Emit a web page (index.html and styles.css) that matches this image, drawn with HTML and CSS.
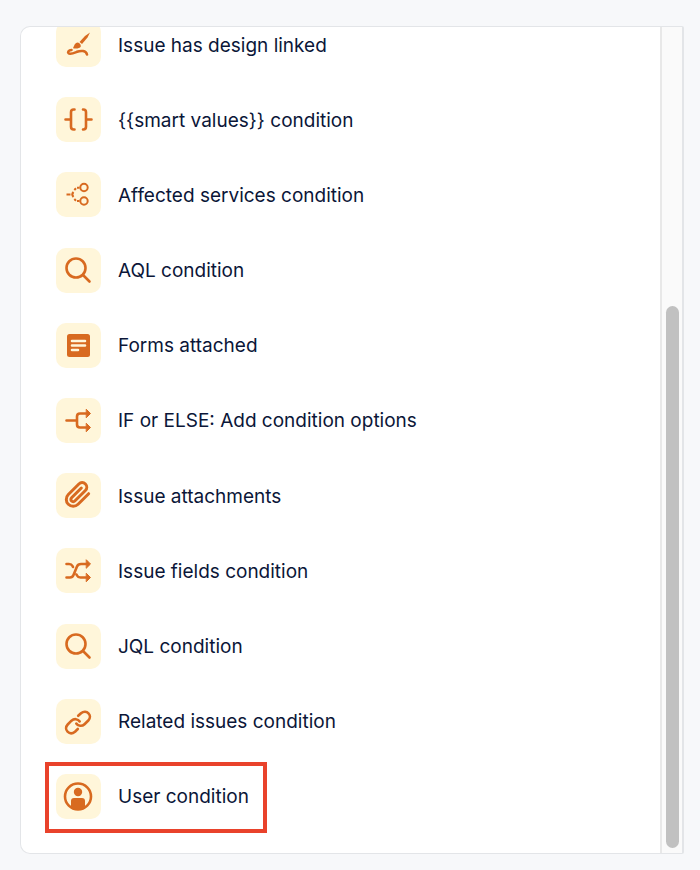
FILE: index.html
```html
<!DOCTYPE html>
<html lang="en">
<head>
    <meta charset="UTF-8" />
    <meta name="viewport" content="width=device-width, initial-scale=1.0" />
    <title>Conditions</title>
    <link rel="stylesheet" href="styles.css">
</head>
<body>
<main class="panel">
    <ul class="condition-list">
        <li>
            <button class="condition" type="button">
                <span class="tile">
                    <svg viewBox="0 0 45 45">
                        <path class="solid" d="M34 10.500L31.500 15.500L26 22L23.500 20L29 14Z" />
                        <path class="solid" d="M22 20.500Q25 21.500 24.800 24.500Q23.500 27 17.500 26.500Q16.500 26 18 24Q19 20.500 22 20.500Z" />
                        <path d="M15.500 28C12.500 28.300 11.500 30 12.500 31.200C14 32.800 18 31 21 29.800C25 28.300 30 28.500 31 32.500" />
                    </svg>
                </span>
                <span class="label">Issue has design linked</span>
            </button>
        </li>
        <li>
            <button class="condition" type="button">
                <span class="tile">
                    <svg viewBox="0 0 45 45">
                        <path d="M18.500 12.500H17.700Q15 12.500 15 15.200V29.800Q15 32.500 17.700 32.500H18.500M9.500 22.500H15M27 12.500H27.300Q30 12.500 30 15.200V29.800Q30 32.500 27.300 32.500H27M30 22.500H35.500" />
                    </svg>
                </span>
                <span class="label">{{smart values}} condition</span>
            </button>
        </li>
        <li>
            <button class="condition" type="button">
                <span class="tile">
                    <svg class="thin" viewBox="0 0 45 45">
                        <circle cx="28" cy="15.500" r="3.700" />
                        <circle cx="28" cy="29" r="3.700" />
                        <path d="M10.500 22.500H14.500M17.500 20Q15 22.500 17.500 25M18.300 18L20 16.300M21 15.700H23.500M18.300 27L20 28.700M21 29H23.500" />
                    </svg>
                </span>
                <span class="label">Affected services condition</span>
            </button>
        </li>
        <li>
            <button class="condition" type="button">
                <span class="tile">
                    <svg viewBox="0 0 45 45">
                        <circle cx="20" cy="20" r="9.500" />
                        <path d="M27 27L33.500 33.500" />
                    </svg>
                </span>
                <span class="label">AQL condition</span>
            </button>
        </li>
        <li>
            <button class="condition" type="button">
                <span class="tile">
                    <svg viewBox="0 0 45 45">
                        <rect class="solid" x="11" y="11" width="23" height="23" rx="2.500" />
                        <path class="cutout" d="M16 18H29M16 22.500H29M16 27H22" />
                    </svg>
                </span>
                <span class="label">Forms attached</span>
            </button>
        </li>
        <li>
            <button class="condition" type="button">
                <span class="tile">
                    <svg viewBox="0 0 45 45">
                        <path d="M10.500 22.500H21M31 15.500H24Q21 15.500 21 18.500V26.500Q21 29.500 24 29.500H31" />
                        <path class="tip" d="M30.500 11.500L34.500 15.500L30.500 19.500ZM30.500 25.500L34.500 29.500L30.500 33.500Z" />
                    </svg>
                </span>
                <span class="label">IF or ELSE: Add condition options</span>
            </button>
        </li>
        <li>
            <button class="condition" type="button">
                <span class="tile">
                    <svg viewBox="0 0 45 45">
                        <path transform="translate(8 8) scale(1.15)" d="M21.440 11.050l-9.190 9.190a6 6 0 0 1-8.490-8.490l9.190-9.190a4 4 0 0 1 5.660 5.660l-9.200 9.190a2 2 0 0 1-2.830-2.830l8.490-8.480" />
                    </svg>
                </span>
                <span class="label">Issue attachments</span>
            </button>
        </li>
        <li>
            <button class="condition" type="button">
                <span class="tile">
                    <svg viewBox="0 0 45 45">
                        <path d="M10.500 16H13Q15.500 16 16.500 18L17 19M10.500 29.500H14Q16.500 29.500 17.500 27L21 18.500Q22 16 25 16H31M20.500 26.500L21 27.500Q22 29.500 24.500 29.500H31" />
                        <path class="tip" d="M30.500 12L34.500 16L30.500 20ZM30.500 25.500L34.500 29.500L30.500 33.500Z" />
                    </svg>
                </span>
                <span class="label">Issue fields condition</span>
            </button>
        </li>
        <li>
            <button class="condition" type="button">
                <span class="tile">
                    <svg viewBox="0 0 45 45">
                        <circle cx="20" cy="20" r="9.500" />
                        <path d="M27 27L33.500 33.500" />
                    </svg>
                </span>
                <span class="label">JQL condition</span>
            </button>
        </li>
        <li>
            <button class="condition" type="button">
                <span class="tile">
                    <svg viewBox="0 0 45 45">
                        <path d="M22.200 16.800L25 14.200C30.500 9.800 37 16.500 32.300 21.500L28.500 25.200C26 27.600 22 27.200 20.300 24.500" />
                        <path d="M21.800 30L19 32.700C13.500 37 7 30.500 11.700 25.500L15.500 21.700C18 19.400 22 19.700 23.700 22.500" />
                    </svg>
                </span>
                <span class="label">Related issues condition</span>
            </button>
        </li>
        <li>
            <button class="condition highlighted" type="button">
                <span class="tile">
                    <svg viewBox="0 0 45 45">
                        <circle cx="22" cy="22.500" r="13" />
                        <circle class="solid" cx="22" cy="18" r="4.200" />
                        <path class="solid" d="M15 33V27Q15 24 18 24H26Q29 24 29 27V33Q26 35.500 22 35.500Q18 35.500 15 33Z" />
                    </svg>
                </span>
                <span class="label">User condition</span>
            </button>
        </li>
    </ul>
    <div class="scrollbar">
        <div class="thumb"></div>
    </div>
</main>
</body>
</html>
```

FILE: styles.css
```css
* {
  box-sizing: border-box;
}

body {
  margin: 0;
  height: 100vh;
  padding: 26px 16px 16px 20px;
  font-family: Inter, sans-serif;
  background-color: #f7f8fa;
  color: #0b1638;
}

.panel {
  display: flex;
  height: 100%;
  background-color: white;
  border: 1px solid #e3e5e8;
  border-right-width: 2px;
  border-radius: 10px 2px 2px 10px;
  overflow: hidden;
}

/* scrolled to the end, so the first row is cut off at the top */
.condition-list {
  flex: 1;
  display: flex;
  flex-direction: column;
  justify-content: space-between;
  list-style: none;
  margin: -5px 0 0;
  padding: 0 35px 34px;
}

.condition {
  position: relative;
  display: flex;
  align-items: center;
  gap: 17px;
  padding: 0;
  border: 0;
  background: none;
  color: inherit;
  font: inherit;
  font-size: 19px;
  line-height: 24px;
  cursor: pointer;
}

.label {
  padding-top: 2px;
}

.tile {
  width: 45px;
  height: 45px;
  border-radius: 10px;
  background-color: #fff6da;
}

.tile svg {
  display: block;
  width: 100%;
  height: 100%;
  fill: none;
  stroke: #d86a20;
  stroke-width: 2.6;
  stroke-linecap: round;
  stroke-linejoin: round;
}

.tile svg.thin {
  stroke-width: 2;
  stroke-linecap: butt;
}

.tile .solid {
  fill: #d86a20;
  stroke: none;
}

.tile .tip {
  fill: #d86a20;
  stroke-width: 1;
}

.tile .cutout {
  stroke: #fff6da;
}

.highlighted::after {
  content: "";
  position: absolute;
  inset: -12px -18px -14px -11px;
  border: 4px solid #e9422b;
}

.scrollbar {
  width: 22px;
  display: flex;
  flex-direction: column;
  justify-content: flex-end;
  align-items: center;
  padding-bottom: 5px;
  background-color: #fafafa;
  border-left: 2px solid #e8e8e8;
}

.thumb {
  width: 13px;
  height: 66%;
  border-radius: 7px;
  background-color: #c1c1c1;
}
```
